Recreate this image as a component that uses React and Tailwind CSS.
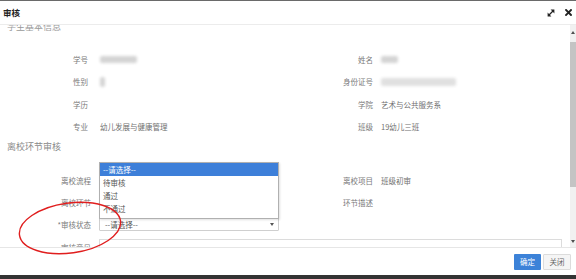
import React from 'react';

const Blur = ({ w, h, tone = 'bg-[#d4d4d4]' }) => (
  <div className={`${tone} rounded-[2px] blur-[1.5px]`} style={{ width: w, height: h }} />
);

// one row of the two-column info grid
const InfoRow = ({ h, labelW, gap, left, leftVal, right, rightVal }) => (
  <div className="flex items-center" style={{ height: h }}>
    <div className="flex items-center w-[283px]">
      <div className="text-right text-[#7a7a7a]" style={{ width: labelW }}>{left}</div>
      <div className="text-[#707070]" style={{ marginLeft: gap }}>{leftVal}</div>
    </div>
    <div className="flex items-center">
      <div className="w-[90px] text-right text-[#7a7a7a]">{right}</div>
      <div className="ml-[8px] text-[#707070]">{rightVal}</div>
    </div>
  </div>
);

const options = ['--请选择--', '待审核', '通过', '不通过'];

export default function App() {
  return (
    <div className="relative w-[576px] h-[279px] flex flex-col overflow-hidden bg-white font-['Noto_Sans_CJK_SC','Noto_Sans',sans-serif] text-[7.5px] leading-none">
      {/* ─── Top edge ─── */}
      <div className="h-[1px] bg-[#6a6a6a]" />

      {/* ─── Header ─── */}
      <div className="h-[24px] flex items-center justify-between pl-[3px] pr-[4px] border-b border-[#ececec]">
        <span className="text-[8.5px] font-bold text-[#222]">审核</span>
        <div className="flex items-center gap-[10px]">
          <svg width="8" height="8" viewBox="0 0 8 8">
            <line x1="1.5" y1="6.5" x2="6.5" y2="1.5" stroke="#222" strokeWidth="1.3" />
            <polygon points="3.6,0.6 7.4,0.6 7.4,4.4" fill="#222" />
            <polygon points="0.6,3.6 0.6,7.4 4.4,7.4" fill="#222" />
          </svg>
          <svg width="7" height="7" viewBox="0 0 7 7">
            <path d="M1 1 L6 6 M6 1 L1 6" stroke="#222" strokeWidth="1.9" strokeLinecap="square" />
          </svg>
        </div>
      </div>

      {/* ─── Scrollable body ─── */}
      <div className="flex-1 flex overflow-hidden">
        <div className="flex-1 overflow-hidden">
          <div className="-mt-[4px]">
            <div className="h-[12px] leading-[12px] pl-[7px] text-[9px] text-[#999]">学生基本信息</div>

            <div className="mt-[15px]">
              <InfoRow h={22.6} labelW={88} gap={12} left="学号" leftVal={<Blur w={37} h={7} />} right="姓名" rightVal={<Blur w={17} h={7} />} />
              <InfoRow h={22.6} labelW={88} gap={12} left="性别" leftVal={<Blur w={5} h={10} />} right="身份证号" rightVal={<Blur w={75} h={8} tone="bg-[#e0e0e0]" />} />
              <InfoRow h={22.6} labelW={88} gap={12} left="学历" leftVal="" right="学院" rightVal="艺术与公共服务系" />
              <InfoRow h={22.6} labelW={88} gap={12} left="专业" leftVal="幼儿发展与健康管理" right="班级" rightVal="19幼儿三班" />
            </div>

            <div className="mt-[2px] h-[14px] leading-[14px] pl-[7px] text-[9px] text-[#8a8a8a]">离校环节审核</div>

            <div className="mt-[15px]">
              <InfoRow h={22} labelW={91} gap={8} left="离校流程" leftVal="" right="离校项目" rightVal="班级初审" />
              <InfoRow h={22} labelW={91} gap={8} left="离校环节" leftVal="" right="环节描述" rightVal="" />
              <div className="flex items-center h-[22px]">
                <div className="w-[91px] text-right text-[#7a7a7a]">*审核状态</div>
                <div className="relative ml-[8px] w-[180px] h-[13px] border border-[#cfcfcf] rounded-[1px] bg-white flex items-center justify-between pl-[5px] pr-[4px] text-[#555]">
                  <span>--请选择--</span>
                  <svg width="4" height="3" viewBox="0 0 4 3">
                    <polygon points="0,0 4,0 2,3" fill="#555" />
                  </svg>
                  {/* ─── Open option list ─── */}
                  <div className="absolute left-[-1px] bottom-full w-[180px] bg-white border border-[#b0b0b0] shadow-[1px_1px_2px_rgba(0,0,0,0.12)] pb-[3px]">
                    {options.map((o, i) => (
                      <div
                        key={o}
                        className={`h-[13px] leading-[13px] px-[3px] ${i === 0 ? 'bg-[#3d7fd9] text-white' : 'text-[#555]'}`}
                      >
                        {o}
                      </div>
                    ))}
                  </div>
                </div>
              </div>
              <div className="flex items-start mt-[3.5px]">
                <div className="w-[91px] pt-[5px] text-right text-[#7a7a7a]">审核意见</div>
                <div className="ml-[8px] w-[463px] h-[30px] border border-[#dcdcdc]" />
              </div>
            </div>
          </div>
        </div>

        {/* ─── Scrollbar ─── */}
        <div className="w-[6px] flex flex-col bg-[#f1f1f1]">
          <div className="h-[14px] flex items-center justify-center">
            <svg width="4" height="3" viewBox="0 0 4 3"><polygon points="2,0 4,3 0,3" fill="#505050" /></svg>
          </div>
          <div className="flex-1 flex flex-col">
            <div className="mt-[3px] h-[145px] bg-[#c4c4c4]" />
          </div>
          <div className="h-[12px] flex items-center justify-center">
            <svg width="4" height="3" viewBox="0 0 4 3"><polygon points="0,0 4,0 2,3" fill="#505050" /></svg>
          </div>
        </div>
      </div>

      {/* ─── Footer ─── */}
      <div className="h-[28px] border-t border-[#e6e6e6] flex items-center justify-end gap-[2px] pr-[5px]">
        <button className="w-[27px] h-[16px] bg-[#3c82d8] text-white rounded-[1px]">确定</button>
        <button className="w-[28px] h-[16px] bg-[#f5f5f5] border border-[#dcdcdc] text-[#666] rounded-[1px]">关闭</button>
      </div>

      <div className="h-[4px] bg-[#333]" />

      {/* ─── Red annotation circle ─── */}
      <svg className="absolute left-0 top-0 pointer-events-none" width="576" height="279">
        <ellipse cx="70" cy="228" rx="51" ry="25" transform="rotate(-8 70 228)" fill="none" stroke="#e01e1e" strokeWidth="1.4" />
      </svg>
    </div>
  );
}
